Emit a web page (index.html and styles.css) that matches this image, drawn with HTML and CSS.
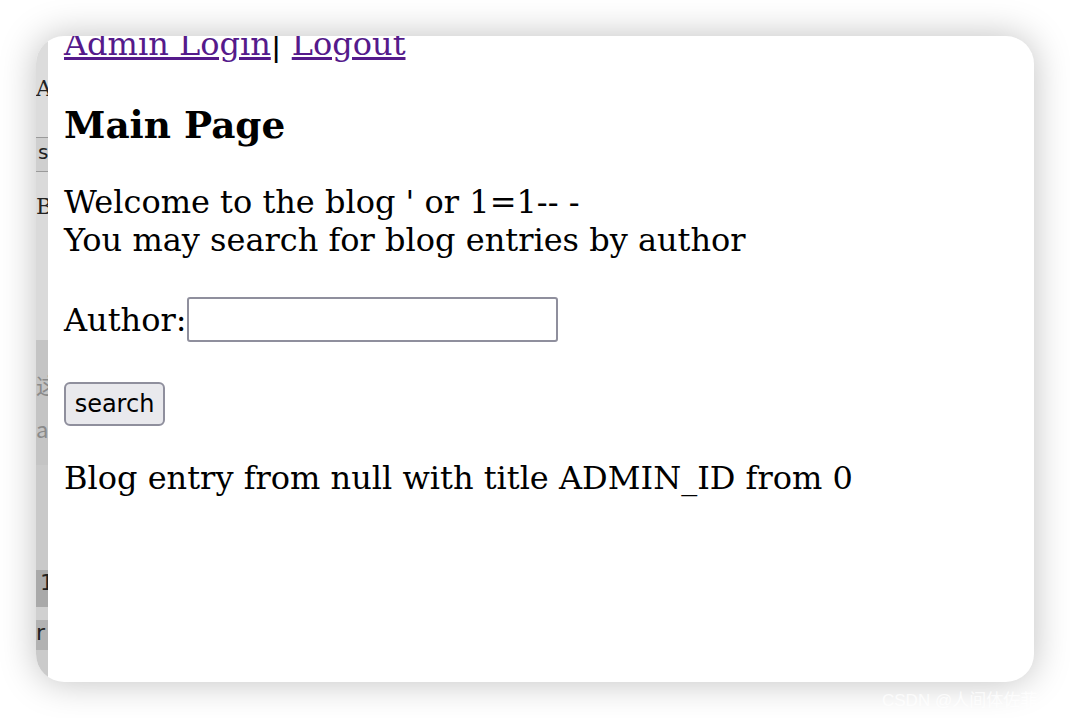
FILE: index.html
```html
<!DOCTYPE html>
<html lang="en">
<head>
    <meta charset="UTF-8">
    <title>Main Page</title>
    <link rel="stylesheet" href="styles.css">
</head>
<body>
    <div class="window">
        <div class="behind">
            <div class="bh bh-a">A</div>
            <div class="bh bh-s">s</div>
            <div class="bh bh-b">B</div>
            <div class="bh bh-c">这<br>a</div>
            <div class="bh bh-d"></div>
            <div class="bh bh-e">1</div>
            <div class="bh bh-f"></div>
            <div class="bh bh-g">r</div>
            <div class="bh bh-h"></div>
        </div>
        <div class="page">
            <div class="nav"><a href="#">Admin Login</a>| <a href="#">Logout</a></div>
            <h3>Main Page</h3>
            <p>Welcome to the blog ' or 1=1-- -<br>You may search for blog entries by author</p>
            <form class="search-form">
                <div class="author-row">Author:<input type="text" class="author-input"></div>
                <button type="button" class="search-button">search</button>
            </form>
            <p class="result">Blog entry from null with title ADMIN_ID from 0</p>
        </div>
    </div>
    <div class="watermark">CSDN @人间体佐菲</div>
</body>
</html>
```

FILE: styles.css
```css
body {
    margin: 0;
    background-color: #ffffff;
    font-family: 'DejaVu Serif', serif;
    width: 1070px;
    height: 718px;
    overflow: hidden;
    position: relative;
}
.window {
    margin: 36px 0 0 36px;
    width: 998px;
    height: 646px;
    border-radius: 28px;
    overflow: hidden;
    display: flex;
    background-color: #ffffff;
    box-shadow: 0 0 36px rgba(0, 0, 0, 0.25);
}
.behind {
    width: 12px;
    flex-shrink: 0;
    display: flex;
    flex-direction: column;
    overflow: hidden;
    font-size: 22px;
    color: #222;
}
.bh {
    overflow: hidden;
    white-space: nowrap;
}
.bh-a {
    height: 101px;
    background-color: #dcdcdc;
    font-family: 'DejaVu Serif', serif;
    padding-top: 40px;
    box-sizing: border-box;
}
.bh-s {
    height: 35px;
    background-color: #cfcfcf;
    border-top: 1px solid #9a9a9a;
    border-bottom: 1px solid #9a9a9a;
    font-family: 'DejaVu Sans', sans-serif;
    font-size: 20px;
    padding: 2px 0 0 2px;
    box-sizing: border-box;
}
.bh-b {
    height: 168px;
    background-color: #dadada;
    font-family: 'DejaVu Serif', serif;
    padding-top: 22px;
    box-sizing: border-box;
}
.bh-c {
    height: 125px;
    background-color: #c4c4c4;
    color: #8a8a8a;
    font-family: 'Noto Sans CJK SC', sans-serif;
    line-height: 44px;
    padding-top: 22px;
    box-sizing: border-box;
}
.bh-d {
    height: 105px;
    background-color: #c9c9c9;
}
.bh-e {
    height: 37px;
    background-color: #a9a9a9;
    font-family: 'DejaVu Sans', sans-serif;
    padding-left: 4px;
}
.bh-f {
    height: 13px;
    background-color: #d0d0d0;
}
.bh-g {
    height: 30px;
    background-color: #b2b2b2;
    font-family: 'DejaVu Sans', sans-serif;
}
.bh-h {
    flex: 1;
    background-color: #cacaca;
}
.page {
    flex: 1;
    padding-left: 16px;
    font-size: 32px;
    color: #000;
}
.nav {
    margin-top: -11px;
}
.nav a {
    color: #551a8b;
}
h3 {
    font-size: 37.4px;
    margin: 40px 0 36px;
}
p {
    margin: 32px 0;
}
.search-form {
    margin: 38px 0 0;
}
.author-row {
    display: flex;
    align-items: center;
}
.author-input {
    width: 371px;
    height: 45px;
    box-sizing: border-box;
    border: 2px solid #8f8f9d;
    border-radius: 3px;
    margin: 0;
    padding: 0;
}
.search-button {
    margin-top: 40px;
    width: 101px;
    height: 44px;
    box-sizing: border-box;
    font-family: 'DejaVu Sans', sans-serif;
    font-size: 24px;
    color: #000;
    background-color: #e9e9ed;
    border: 2px solid #8f8f9d;
    border-radius: 6px;
    padding: 0;
}
.result {
    margin-top: 33px;
}
.watermark {
    position: absolute;
    left: 882px;
    top: 686px;
    font-family: 'Liberation Sans', 'Noto Sans CJK SC', sans-serif;
    font-size: 17px;
    color: rgba(255, 255, 255, 0.75);
}
```
